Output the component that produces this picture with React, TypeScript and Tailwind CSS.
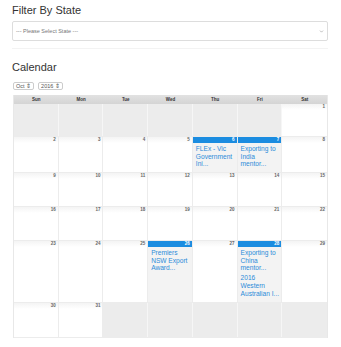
import { ChevronDown } from 'lucide-react';

type Ev = { title: string[] };
type Day = { n?: number; out?: boolean; events?: Ev[]; hi?: boolean };

const weeks: Day[][] = [
  [{ out: true }, { out: true }, { out: true }, { out: true }, { out: true }, { out: true }, { n: 1 }],
  [
    { n: 2 }, { n: 3 }, { n: 4 }, { n: 5 },
    { n: 6, hi: true, events: [{ title: ['FLEx - Vic', 'Government', 'Ini...'] }] },
    { n: 7, hi: true, events: [{ title: ['Exporting to', 'India', 'mentor...'] }] },
    { n: 8 },
  ],
  [{ n: 9 }, { n: 10 }, { n: 11 }, { n: 12 }, { n: 13 }, { n: 14 }, { n: 15 }],
  [{ n: 16 }, { n: 17 }, { n: 18 }, { n: 19 }, { n: 20 }, { n: 21 }, { n: 22 }],
  [
    { n: 23 }, { n: 24 }, { n: 25 },
    { n: 26, hi: true, events: [{ title: ['Premiers', 'NSW Export', 'Award...'] }] },
    { n: 27 },
    {
      n: 28, hi: true, events: [
        { title: ['Exporting to', 'China', 'mentor...'] },
        { title: ['2016', 'Western', 'Australian I...'] },
      ],
    },
    { n: 29 },
  ],
  [{ n: 30 }, { n: 31 }, { out: true }, { out: true }, { out: true }, { out: true }, { out: true }],
];

const rowHeights = ['h-[33px]', 'h-[36px]', 'h-[34px]', 'h-[34px]', 'h-[62px]', 'h-[35px]'];
const dayNames = ['Sun', 'Mon', 'Tue', 'Wed', 'Thu', 'Fri', 'Sat'];

function Cell({ d }: { d: Day }) {
  if (d.out) return <div className="bg-[#ececec] border-r border-[#f6f6f6] last:border-r-0" />;
  return (
    <div className={`flex flex-col border-r border-[#ececec] last:border-r-0 ${d.hi ? 'bg-[#f3f3f3]' : 'bg-white'}`}>
      <div
        className={`h-[6px] px-[2px] text-right text-[4.5px] leading-[6px] font-bold ${
          d.hi ? 'bg-[#1b8ce0] text-white' : 'bg-gradient-to-b from-[#f4f4f4] to-white text-[#666]'
        }`}
      >
        {d.n}
      </div>
      {d.events && (
        <div className="flex flex-col gap-[2px] px-[3px] pt-[2px]">
          {d.events.map((e, i) => (
            <div key={i} className="whitespace-nowrap text-[6.6px] leading-[7.7px] text-[#2b8bd9]">
              {e.title.map((t) => (
                <div key={t}>{t}</div>
              ))}
            </div>
          ))}
        </div>
      )}
    </div>
  );
}

export default function App() {
  return (
    <div className="min-h-screen bg-white px-[12px] pt-[3px] font-['Liberation_Sans',Arial,sans-serif] text-[#333]">
      {/* Filter */}
      <h2 className="text-[11px] leading-[14px]">Filter By State</h2>
      <div className="mt-[4px] flex h-[20px] w-[316px] items-center justify-between rounded-[2px] border border-[#ddd] px-[3px]">
        <span className="text-[5.5px] text-[#777]">--- Please Select State ---</span>
        <ChevronDown className="h-[5px] w-[5px] text-[#999]" strokeWidth={3} />
      </div>
      <div className="mt-[7px] h-px w-[316px] bg-[#f3f3f3]" />

      {/* Calendar */}
      <h2 className="mt-[11px] text-[11px] leading-[14px]">Calendar</h2>
      <div className="mt-[8px] flex gap-[4px] pl-px">
        <span className="flex h-[8px] items-center rounded-[2px] border border-[#ccc] px-[2px] text-[5.5px] text-[#555]">Oct ⇕</span>
        <span className="flex h-[8px] items-center rounded-[2px] border border-[#ccc] px-[2px] text-[5.5px] text-[#555]">2016 ⇕</span>
      </div>

      <div className="mt-[5px] ml-px w-[315px] border-l border-r border-[#e8e8e8]">
        <div className="grid h-[9px] grid-cols-7 bg-gradient-to-b from-[#e2e2e2] to-[#d4d4d4]">
          {dayNames.map((n) => (
            <div key={n} className="text-center text-[4.5px] leading-[9px] font-bold text-[#333]">{n}</div>
          ))}
        </div>
        {weeks.map((w, i) => (
          <div key={i} className={`grid grid-cols-7 border-b border-[#ececec] ${rowHeights[i]}`}>
            {w.map((d, j) => (
              <Cell key={j} d={d} />
            ))}
          </div>
        ))}
      </div>
    </div>
  );
}
